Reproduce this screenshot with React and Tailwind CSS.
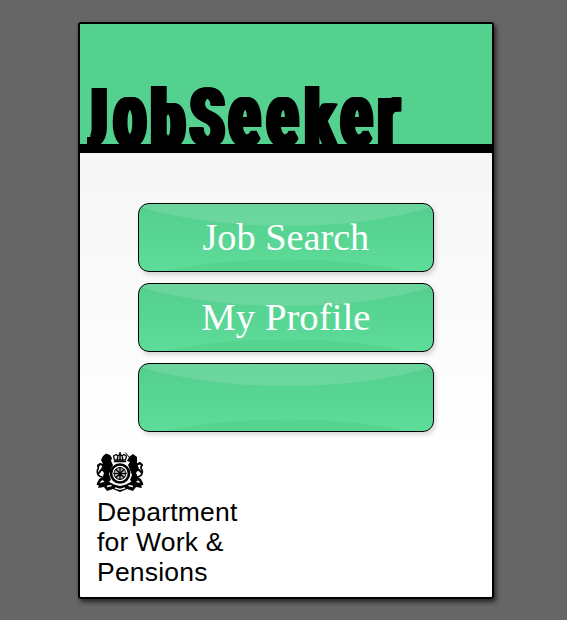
const titleLetters = [
  {
    ch: 'J',
    left: 'left-[-5px]',
    look: 'scale-x-[0.7] scale-y-[1.0] [clip-path:polygon(22px_0,70px_0,70px_90px,17px_90px,17px_60px,22px_60px)]',
  },
  { ch: 'o', left: 'left-[34px]', look: 'scale-x-[0.69] scale-y-[1.11]' },
  { ch: 'b', left: 'left-[71px]', look: 'scale-x-[0.73] scale-y-[0.97]' },
  { ch: 'S', left: 'left-[110px]', look: 'scale-x-[0.67] scale-y-[1.0]' },
  { ch: 'e', left: 'left-[149px]', look: 'scale-x-[0.69] scale-y-[1.11]' },
  { ch: 'e', left: 'left-[187px]', look: 'scale-x-[0.69] scale-y-[1.11]' },
  { ch: 'k', left: 'left-[225px]', look: 'scale-x-[0.67] scale-y-[0.97]' },
  { ch: 'e', left: 'left-[261px]', look: 'scale-x-[0.69] scale-y-[1.11]' },
  { ch: 'r', left: 'left-[298px]', look: 'scale-x-[0.69] scale-y-[1.11]' },
];

function Title() {
  return (
    <h1 className="relative h-full w-full font-[Roboto,sans-serif] text-[82px] leading-[82px] font-black text-black [text-shadow:1px_0_#000,2px_0_#000,3px_0_#000,4px_0_#000,-1px_0_#000,-2px_0_#000,-3px_0_#000,-4px_0_#000]">
      {titleLetters.map((l, i) => (
        <span key={i} className={`absolute top-[53px] origin-[0_69px] ${l.left} ${l.look}`}>
          {l.ch}
        </span>
      ))}
    </h1>
  );
}

function GlossyButton({ label, look }) {
  return (
    <button className="relative flex h-[69px] w-[296px] items-center justify-center overflow-hidden rounded-[11px] border border-black bg-linear-to-b from-[#53ce8e] to-[#5edc99] shadow-[2px_3px_4px_rgba(0,0,0,0.15)]">
      <svg className="absolute inset-0 h-full w-full" viewBox="0 0 294 67" aria-hidden="true">
        <path d="M0 0H294L290 4Q225 22 147 22T4 4Z" fill="#fff" fillOpacity=".13" />
        <path d="M25 67Q80 55.500 147 55.500T269 67Z" fill="#4fce86" fillOpacity=".5" />
      </svg>
      <span className={`relative -top-px whitespace-nowrap font-['Liberation_Serif',serif] text-[38px] leading-[44px] text-white ${look}`}>
        {label}
      </span>
    </button>
  );
}

function Crest() {
  return (
    <svg className="block h-[40px] w-[48px]" viewBox="0 0 48 40" aria-hidden="true">
      <g fill="none" stroke="#000" strokeLinecap="round" strokeLinejoin="round">
        <path d="M18.500 8L17.500 4L20 2.500L22 4L24 2L26 4L28 2.500L30.500 4L29.500 8Z" strokeWidth="1.300" />
        <path d="M18.500 9.500H29.500M24 .5V8M21.500 5V8M26.500 5V8" strokeWidth="1.500" />
        <circle cx="24" cy="21.500" r="9" strokeWidth="2.700" />
        <circle cx="24" cy="21.500" r="6" fill="#000" fillOpacity=".35" strokeWidth="1" />
        <path d="M24 15.500V27.500M18 21.500H30M20 17.500L28 25.500M28 17.500L20 25.500" strokeWidth="1.200" />
        <path d="M6 25Q.5 24 1.500 18Q3 16 2 13M42 25Q47.500 23 46 18Q44 16 46 13" strokeWidth="1.700" />
        <path d="M10 14L4 12L2 14M12 18L5 18L3 21M38 14L44 11L46 13M36 18L43 18L45 20" strokeWidth="2" />
        <path d="M10 25L4 28L2 32L6 33M38 25L44 28L46 32L42 33" strokeWidth="2.600" />
        <path d="M34 6L29.500 .8" strokeWidth="1" />
      </g>
      <path d="M7 4L10 1.500L14 3L16 6L15 9L17 13L15 17L13 22L15 28L10 32L6 27L8 21L5 17L7 12L5 8Z" />
      <path d="M41 5L37 2L33 5L31 9L34 10L32 13L34 18L36 23L34 28L38 32L43 27L40 21L43 17L41 11Z" />
      <path d="M4 31L12 29Q17 33 24 34Q31 33 36 29L44 31L46 36L40 35L37 39L31 37L24 40L17 37L11 39L8 35L2 36Z" />
      <path d="M11 34.500L15.500 33.500M19 36L24 37.300L29 36M32.500 33.500L37 34.500" fill="none" stroke="#fff" strokeWidth="1.300" />
    </svg>
  );
}

export default function App() {
  return (
    <div className="flex h-[620px] w-[567px] items-start bg-[#666] pt-[22px] pl-[78px]">
      <main className="flex h-[577px] w-[416px] flex-col overflow-hidden rounded-[3px] border-2 border-black bg-linear-to-b from-[#f2f2f2] to-white to-75% shadow-[2px_3px_5px_rgba(0,0,0,0.65)]">
        <header className="h-[129px] shrink-0 border-b-[9px] border-black bg-[#55d18f]">
          <Title />
        </header>
        <nav className="mt-[50px] flex flex-col items-center gap-[11px]">
          <GlossyButton label="Job Search" look="scale-x-[1.007]" />
          <GlossyButton label="My Profile" look="scale-x-[1.02]" />
          <GlossyButton label="" look="" />
        </nav>
        <footer className="mt-[20px] ml-[16px]">
          <Crest />
          <p className="mt-[5px] ml-px font-['Liberation_Sans',sans-serif] text-[26.5px] leading-[30px] tracking-[0.2px] text-black">
            Department
            <br />
            for Work &amp;
            <br />
            Pensions
          </p>
        </footer>
      </main>
    </div>
  );
}
